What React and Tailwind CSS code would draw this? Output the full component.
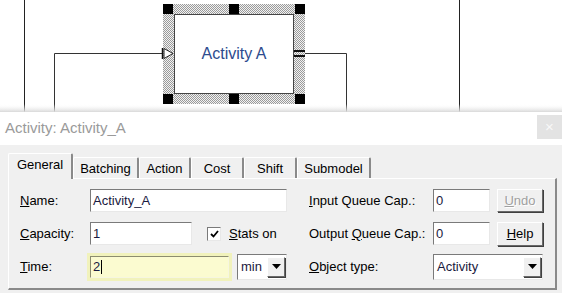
import React from "react";

function Canvas() {
  return (
    <div className="relative h-[112px] w-full bg-white overflow-hidden">
      <svg width="562" height="112" className="absolute left-0 top-0">
        <defs>
          <pattern id="hatch" width="2" height="2" patternUnits="userSpaceOnUse">
            <rect width="2" height="2" fill="#f2f2f2" />
            <rect width="1" height="1" fill="#9a9a9a" />
            <rect x="1" y="1" width="1" height="1" fill="#9a9a9a" />
          </pattern>
          <linearGradient id="shade" x1="0" y1="0" x2="0" y2="1">
            <stop offset="0" stopColor="#ffffff" stopOpacity="0" />
            <stop offset="1" stopColor="#d8d8d8" />
          </linearGradient>
        </defs>
        <line x1="24.5" y1="0" x2="24.5" y2="112" stroke="#222" />
        <line x1="459.5" y1="0" x2="459.5" y2="112" stroke="#222" />
        <path d="M54.5 112 V53.5 H162" fill="none" stroke="#333" />
        <path d="M305 53.5 H346.5 V112" fill="none" stroke="#333" />
        <rect x="163" y="4" width="142" height="100" fill="url(#hatch)" />
        <rect x="174.5" y="14.5" width="119" height="79" fill="#fff" stroke="#444" />
        <rect x="163" y="4" width="10" height="10" fill="#000" />
        <rect x="229" y="4" width="10" height="10" fill="#000" />
        <rect x="295" y="4" width="10" height="10" fill="#000" />
        <rect x="163" y="94" width="10" height="10" fill="#000" />
        <rect x="229" y="94" width="10" height="10" fill="#000" />
        <rect x="295" y="94" width="10" height="10" fill="#000" />
        <line x1="162.5" y1="48" x2="162.5" y2="59" stroke="#111" strokeWidth="1.5" />
        <path d="M164 48.5 L173 53.5 L164 58.5 Z" fill="#fff" stroke="#222" />
        <rect x="294" y="50" width="11" height="2" fill="#111" />
        <rect x="294" y="55" width="11" height="2" fill="#111" />
        <rect x="0" y="104" width="562" height="8" fill="url(#shade)" />
      </svg>
      <div className="absolute left-[174px] top-[14px] flex h-[80px] w-[120px] items-center justify-center text-[16px] text-[#2d4b8e]">
        Activity A
      </div>
    </div>
  );
}

function Sunken({ className = "", children }) {
  return (
    <div
      className={`flex items-center border border-t-[#7a7a7a] border-l-[#7a7a7a] border-b-[#e8e8e8] border-r-[#e8e8e8] bg-white pl-[2px] text-[13px] text-[#1a1a40] ${className}`}
    >
      {children}
    </div>
  );
}

function Raised({ className = "", children }) {
  return (
    <div
      className={`flex items-center justify-center border border-t-white border-l-white border-b-[#696969] border-r-[#696969] bg-[#f0f0f0] shadow-[1px_1px_0_#404040] ${className}`}
    >
      {children}
    </div>
  );
}

function Arrow() {
  return (
    <svg width="9" height="5" viewBox="0 0 9 5">
      <path d="M0 0 H9 L4.5 5 Z" fill="#000" />
    </svg>
  );
}

function Select({ className = "", value }) {
  return (
    <div
      className={`flex items-center border border-t-[#7a7a7a] border-l-[#7a7a7a] border-b-[#e8e8e8] border-r-[#e8e8e8] bg-white p-[1px] ${className}`}
    >
      <span className="flex-1 pl-[2px] text-[13px] text-[#1a1a40]">{value}</span>
      <Raised className="h-[20px] w-[18px]">
        <Arrow />
      </Raised>
    </div>
  );
}

function Label({ pre = "", k, rest, className = "" }) {
  return (
    <span className={`whitespace-pre text-[13px] text-black ${className}`}>
      {pre}
      <span className="underline">{k}</span>
      {rest}
    </span>
  );
}

const tabs = [
  { name: "General", w: "w-[65px]" },
  { name: "Batching", w: "w-[66px]" },
  { name: "Action", w: "w-[52px]" },
  { name: "Cost", w: "w-[53px]" },
  { name: "Shift", w: "w-[53px]" },
  { name: "Submodel", w: "w-[74px]" },
];

export default function App() {
  return (
    <div className="h-[293px] w-[562px] overflow-hidden bg-[#f0f0f0] font-['Liberation_Sans',Arial,sans-serif]">
      <Canvas />

      <div className="flex h-[33px] items-center justify-between bg-white">
        <span className="pl-[5px] text-[15px] text-[#9a9a9a]">Activity: Activity_A</span>
        <div className="mb-[3px] flex h-[24px] w-[25px] items-center justify-center bg-[#e3e3e3] text-[15px] text-[#f8f8f8]">
          ×
        </div>
      </div>

      <div className="px-[8px] pt-[8px]">
        <div className="flex h-[25px] items-end">
          {tabs.map((t, i) =>
            i === 0 ? (
              <div
                key={t.name}
                className={`relative z-10 -mb-px flex h-[26px] ${t.w} items-center justify-center rounded-t-[2px] border-l border-t border-r-2 border-l-white border-t-white border-r-[#8a8a8a] bg-[#f0f0f0] pb-[3px] text-[13px]`}
              >
                {t.name}
              </div>
            ) : (
              <div
                key={t.name}
                className={`flex h-[21px] ${t.w} items-center justify-center rounded-t-[2px] border-l border-t border-r-2 border-l-white border-t-white border-r-[#8a8a8a] bg-[#f0f0f0] pt-px text-[13px]`}
              >
                {t.name}
              </div>
            )
          )}
        </div>

        <div className="h-[112px] w-[549px] border border-t-white border-l-white border-b-2 border-r-2 border-b-[#8a8a8a] border-r-[#8a8a8a] pl-[11px] pt-[10px]">
          <div className="flex h-[23px] items-center">
            <div className="flex w-[289px] items-center">
              <Label k="N" rest="ame:" className="w-[70px]" />
              <Sunken className="h-[23px] w-[197px]">Activity_A</Sunken>
            </div>
            <Label k="I" rest="nput Queue Cap.:" className="w-[124px]" />
            <Sunken className="h-[23px] w-[57px]">0</Sunken>
            <Raised className="ml-[7px] h-[23px] w-[46px]">
              <span className="text-[13px] text-[#a0a0a0] [text-shadow:1px_1px_0_#fff]">
                <span className="underline">U</span>ndo
              </span>
            </Raised>
          </div>

          <div className="mt-[10px] flex h-[23px] items-center">
            <div className="flex w-[289px] items-center">
              <Label k="C" rest="apacity:" className="w-[70px]" />
              <Sunken className="h-[23px] w-[102px]">1</Sunken>
              <div className="ml-[15px] flex h-[14px] w-[14px] items-center justify-center border border-t-[#7a7a7a] border-l-[#7a7a7a] border-b-[#e8e8e8] border-r-[#e8e8e8] bg-white">
                <svg width="9" height="8" viewBox="0 0 9 8">
                  <path d="M1 4 L3.5 6.5 L8 1" fill="none" stroke="#000" strokeWidth="1.8" />
                </svg>
              </div>
              <Label k="S" rest="tats on" className="ml-[8px]" />
            </div>
            <Label pre="Output " k="Q" rest="ueue Cap.:" className="w-[124px]" />
            <Sunken className="h-[23px] w-[57px]">0</Sunken>
            <Raised className="ml-[7px] h-[24px] w-[46px]">
              <span className="text-[13px] text-black">
                <span className="underline">H</span>elp
              </span>
            </Raised>
          </div>

          <div className="mt-[9px] flex h-[25px] items-center">
            <div className="flex w-[289px] items-center">
              <Label k="T" rest="ime:" className="w-[67px]" />
              <div className="h-[28px] w-[145px] bg-[#f1f2bc] p-[3px]">
                <div className="flex h-[22px] items-center border border-t-[#8c8c70] border-l-[#8c8c70] border-b-[#f6f6e0] border-r-[#f6f6e0] bg-[#fbfbd0] pl-[2px] text-[13px] text-[#1a1a40]">
                  2<span className="ml-px h-[14px] w-px bg-black" />
                </div>
              </div>
              <Select className="ml-[5px] h-[26px] w-[50px]" value="min" />
            </div>
            <Label k="O" rest="bject type:" className="w-[124px]" />
            <Select className="h-[26px] w-[110px]" value="Activity" />
          </div>
        </div>
      </div>
    </div>
  );
}
